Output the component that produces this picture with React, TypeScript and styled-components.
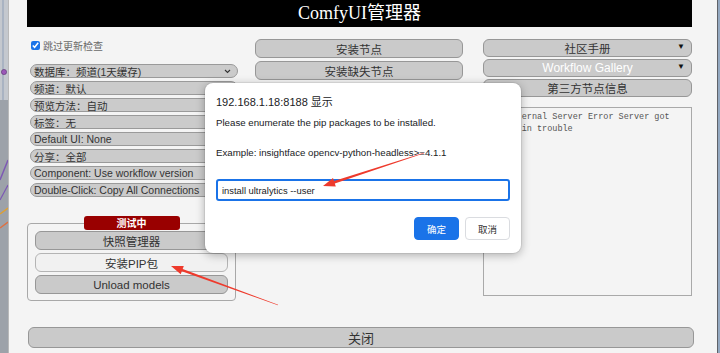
import React from "react";
import styled, { createGlobalStyle } from "styled-components";

const GlobalStyle = createGlobalStyle`
  html, body {
    margin: 0;
    padding: 0;
    overflow: hidden;
  }
  body {
    font-family: "Liberation Sans", "Noto Sans CJK SC", sans-serif;
  }
`;

const SANS = `"Liberation Sans", "Noto Sans CJK SC", sans-serif`;

const selects = [
  "数据库：频道(1天缓存)",
  "频道：默认",
  "预览方法：自动",
  "标签：无",
  "Default UI: None",
  "分享：全部",
  "Component: Use workflow version",
  "Double-Click: Copy All Connections",
];

// the rest of the column sits under the prompt dialog
const middleButtons = ["安装节点", "安装缺失节点"];

type Pt = [number, number];

// tapered hand-drawn style arrow, thin tail to thick head
const arrowPoints = (tail: Pt, tip: Pt) => {
  const dx = tip[0] - tail[0];
  const dy = tip[1] - tail[1];
  const len = Math.hypot(dx, dy);
  const ux = dx / len;
  const uy = dy / len;
  const nx = -uy;
  const ny = ux;
  const headLen = 12;
  const bx = tip[0] - ux * headLen;
  const by = tip[1] - uy * headLen;
  const p = (x: number, y: number) => `${x.toFixed(1)},${y.toFixed(1)}`;
  return [
    p(tail[0] + nx * 0.3, tail[1] + ny * 0.3),
    p(bx + nx * 1.3, by + ny * 1.3),
    p(bx + nx * 4.5, by + ny * 4.5),
    p(tip[0], tip[1]),
    p(bx - nx * 4.5, by - ny * 4.5),
    p(bx - nx * 1.3, by - ny * 1.3),
    p(tail[0] - nx * 0.3, tail[1] - ny * 0.3),
  ].join(" ");
};

const App = () => {
  return (
    <Page>
      <GlobalStyle />
      <CanvasStrip>
        <svg width="8" height="353" viewBox="0 0 8 353">
          <rect x="0" y="0" width="8" height="100" fill="#c4c8ce" />
          <rect x="2" y="0" width="2" height="100" fill="#a9b3c2" />
          <circle cx="4" cy="72" r="2.6" fill="#9b57b8" stroke="#5a3470" strokeWidth="0.6" />
          <line x1="0" y1="180" x2="8" y2="160" stroke="#7d58b5" strokeWidth="1.4" />
          <line x1="0" y1="200" x2="8" y2="185" stroke="#7d58b5" strokeWidth="1.2" />
          <line x1="0" y1="214" x2="8" y2="208" stroke="#e0a030" strokeWidth="1.4" />
          <line x1="0" y1="228" x2="8" y2="222" stroke="#e07040" strokeWidth="1.4" />
        </svg>
      </CanvasStrip>

      <Panel>
        <Header>ComfyUI管理器</Header>

        <Columns>
          <LeftCol>
            <CheckRow>
              <Check type="checkbox" defaultChecked />
              <CheckLabel>跳过更新检查</CheckLabel>
            </CheckRow>
            <SelectList>
              {selects.map((s) => (
                <SelectBox key={s}>
                  <span>{s}</span>
                  <svg width="7" height="5" viewBox="0 0 7 5">
                    <path d="M1 1 L3.5 3.5 L6 1" fill="none" stroke="#333" strokeWidth="1.1" />
                  </svg>
                </SelectBox>
              ))}
            </SelectList>
            <TestSet>
              <Legend>测试中</Legend>
              <SetButton>快照管理器</SetButton>
              <SetButton $light>安装PIP包</SetButton>
              <SetButton>Unload models</SetButton>
            </TestSet>
          </LeftCol>

          <MidCol>
            {middleButtons.map((b) => (
              <MidButton key={b}>{b}</MidButton>
            ))}
            <MidButton aria-hidden />
          </MidCol>

          <RightCol>
            <RightButton>
              社区手册
              <Caret>▼</Caret>
            </RightButton>
            <RightButton $white>
              Workflow Gallery
              <Caret>▼</Caret>
            </RightButton>
            <RightButton>第三方节点信息</RightButton>
            <LogArea readOnly value="500 Internal Server Error Server got itself in trouble" />
          </RightCol>
        </Columns>

        <CloseButton>关闭</CloseButton>
      </Panel>

      <RightStrip />

      <PromptDialog>
        <PromptTitle>192.168.1.18:8188 显示</PromptTitle>
        <PromptText>Please enumerate the pip packages to be installed.</PromptText>
        <PromptText $gap>Example: insightface opencv-python-headless&gt;=4.1.1</PromptText>
        <PromptInput defaultValue="install ultralytics --user" autoFocus />
        <PromptActions>
          <PromptButton $primary>确定</PromptButton>
          <PromptButton>取消</PromptButton>
        </PromptActions>
      </PromptDialog>

      <ArrowLayer width="720" height="353" viewBox="0 0 720 353">
        <polygon points={arrowPoints([424, 153], [323, 186])} fill="#ee3a2c" />
        <polygon points={arrowPoints([278, 305], [171, 266])} fill="#ee3a2c" />
      </ArrowLayer>
    </Page>
  );
};

export default App;

const Page = styled.div`
  position: relative;
  display: flex;
  width: 720px;
  height: 353px;
  overflow: hidden;
  background: #9da2a9;
`;

const CanvasStrip = styled.div`
  width: 8px;
  flex: none;
  border-right: 1px solid #b9b9b9;
  svg {
    display: block;
  }
`;

const RightStrip = styled.div`
  width: 2px;
  flex: none;
  border-left: 1px solid #5f6268;
  background: #93a8c0;
`;

const Panel = styled.div`
  flex: 1;
  display: flex;
  flex-direction: column;
  padding-left: 18px;
  background: #f4f4f4;
`;

const Header = styled.div`
  width: 665px;
  height: 27px;
  background: #000;
  color: #fff;
  font-family: "Liberation Serif", "Noto Sans CJK SC", serif;
  font-size: 18px;
  line-height: 27px;
  text-align: center;
`;

const Columns = styled.div`
  display: flex;
  width: 665px;
  height: 288px;
  margin-top: 12px;
`;

const LeftCol = styled.div`
  width: 211px;
  flex: none;
  display: flex;
  flex-direction: column;
`;

const CheckRow = styled.label`
  display: flex;
  align-items: center;
  gap: 3px;
  height: 12px;
  padding-left: 4px;
`;

const Check = styled.input`
  width: 9px;
  height: 9px;
  margin: 0;
  accent-color: #1a73e8;
`;

const CheckLabel = styled.span`
  font-family: "Noto Sans CJK SC", sans-serif;
  font-size: 10px;
  color: #6a6a6a;
`;

const SelectList = styled.div`
  display: flex;
  flex-direction: column;
  gap: 3px;
  margin-top: 13px;
  padding-left: 3px;
`;

const SelectBox = styled.div`
  box-sizing: border-box;
  display: flex;
  align-items: center;
  justify-content: space-between;
  height: 14px;
  padding: 0 6px 0 3px;
  border: 1px solid #9a9a9a;
  border-radius: 7px;
  background: #cbcbcb;
  font-family: ${SANS};
  font-size: 10.5px;
  color: #333;
  white-space: nowrap;
  svg {
    flex: none;
  }
`;

const TestSet = styled.fieldset`
  box-sizing: border-box;
  width: 209px;
  margin: 19px 0 0;
  padding: 1px 7px 6px;
  border: 1px solid #a8a8a8;
  border-radius: 4px;
  display: flex;
  flex-direction: column;
  gap: 3px;
`;

const Legend = styled.legend`
  width: 96px;
  height: 14px;
  margin: 0 auto;
  padding: 0;
  background: #990000;
  border-radius: 3px;
  color: #fff;
  font-family: "Noto Sans CJK SC", sans-serif;
  font-size: 10px;
  font-weight: bold;
  line-height: 14px;
  text-align: center;
`;

const BaseButton = styled.div`
  box-sizing: border-box;
  display: flex;
  align-items: center;
  justify-content: center;
  border: 1px solid #979797;
  border-radius: 6px;
  background: #cacaca;
  color: #333;
  font-family: ${SANS};
  white-space: nowrap;
`;

const SetButton = styled(BaseButton)<{ $light?: boolean }>`
  height: 19px;
  font-size: 11.5px;
  background: ${(p) => (p.$light ? "#f1f1f1" : "#cacaca")};
  border-color: ${(p) => (p.$light ? "#b4b4b4" : "#979797")};
`;

const MidCol = styled.div`
  width: 208px;
  flex: none;
  margin-left: 17px;
  display: flex;
  flex-direction: column;
  gap: 3px;
`;

const MidButton = styled(BaseButton)`
  height: 19px;
  font-size: 11.5px;
`;

const RightCol = styled.div`
  width: 209px;
  flex: none;
  margin-left: 20px;
  display: flex;
  flex-direction: column;
  gap: 2px;
`;

const RightButton = styled(BaseButton)<{ $white?: boolean }>`
  position: relative;
  height: 18px;
  font-size: ${(p) => (p.$white ? "12px" : "11.5px")};
  color: ${(p) => (p.$white ? "#fff" : "#333")};
`;

const Caret = styled.span`
  position: absolute;
  right: 6px;
  top: 2px;
  font-size: 8px;
  color: #111;
`;

const LogArea = styled.textarea`
  box-sizing: border-box;
  height: 189px;
  margin-top: 8px;
  padding: 3px 3px 3px 2px;
  border: 1px solid #a9a9a9;
  background: #f4f4f4;
  color: #555;
  font-family: "Liberation Mono", monospace;
  font-size: 8.5px;
  line-height: 12px;
  resize: none;
  outline: none;
`;

const CloseButton = styled(BaseButton)`
  width: 666px;
  height: 21px;
  margin-left: 1px;
  font-size: 13px;
`;

const PromptDialog = styled.div`
  position: absolute;
  left: 205px;
  top: 83px;
  box-sizing: border-box;
  width: 316px;
  height: 170px;
  padding: 12px 11px 0;
  background: #fff;
  border-radius: 8px;
  box-shadow: 0 2px 10px rgba(0, 0, 0, 0.3), 0 0 0 1px rgba(0, 0, 0, 0.06);
  display: flex;
  flex-direction: column;
  font-family: ${SANS};
  color: #202124;
`;

const PromptTitle = styled.div`
  font-size: 11px;
  line-height: 14px;
`;

const PromptText = styled.div<{ $gap?: boolean }>`
  margin-top: ${(p) => (p.$gap ? "17px" : "7px")};
  font-size: 9.7px;
  line-height: 13px;
`;

const PromptInput = styled.input`
  box-sizing: border-box;
  height: 22px;
  margin-top: 20px;
  padding: 0 4px;
  border: 2px solid #1a73e8;
  border-radius: 3px;
  outline: none;
  font-family: ${SANS};
  font-size: 9.4px;
  color: #202124;
`;

const PromptActions = styled.div`
  display: flex;
  justify-content: flex-end;
  gap: 6px;
  margin-top: 16px;
`;

const PromptButton = styled.div<{ $primary?: boolean }>`
  box-sizing: border-box;
  width: 45px;
  height: 23px;
  display: flex;
  align-items: center;
  justify-content: center;
  border-radius: 4px;
  border: 1px solid ${(p) => (p.$primary ? "#1a73e8" : "#dadce0")};
  background: ${(p) => (p.$primary ? "#1a73e8" : "#fff")};
  color: ${(p) => (p.$primary ? "#fff" : "#333")};
  font-family: "Noto Sans CJK SC", sans-serif;
  font-size: 9.5px;
`;

const ArrowLayer = styled.svg`
  position: absolute;
  left: 0;
  top: 0;
  pointer-events: none;
`;
